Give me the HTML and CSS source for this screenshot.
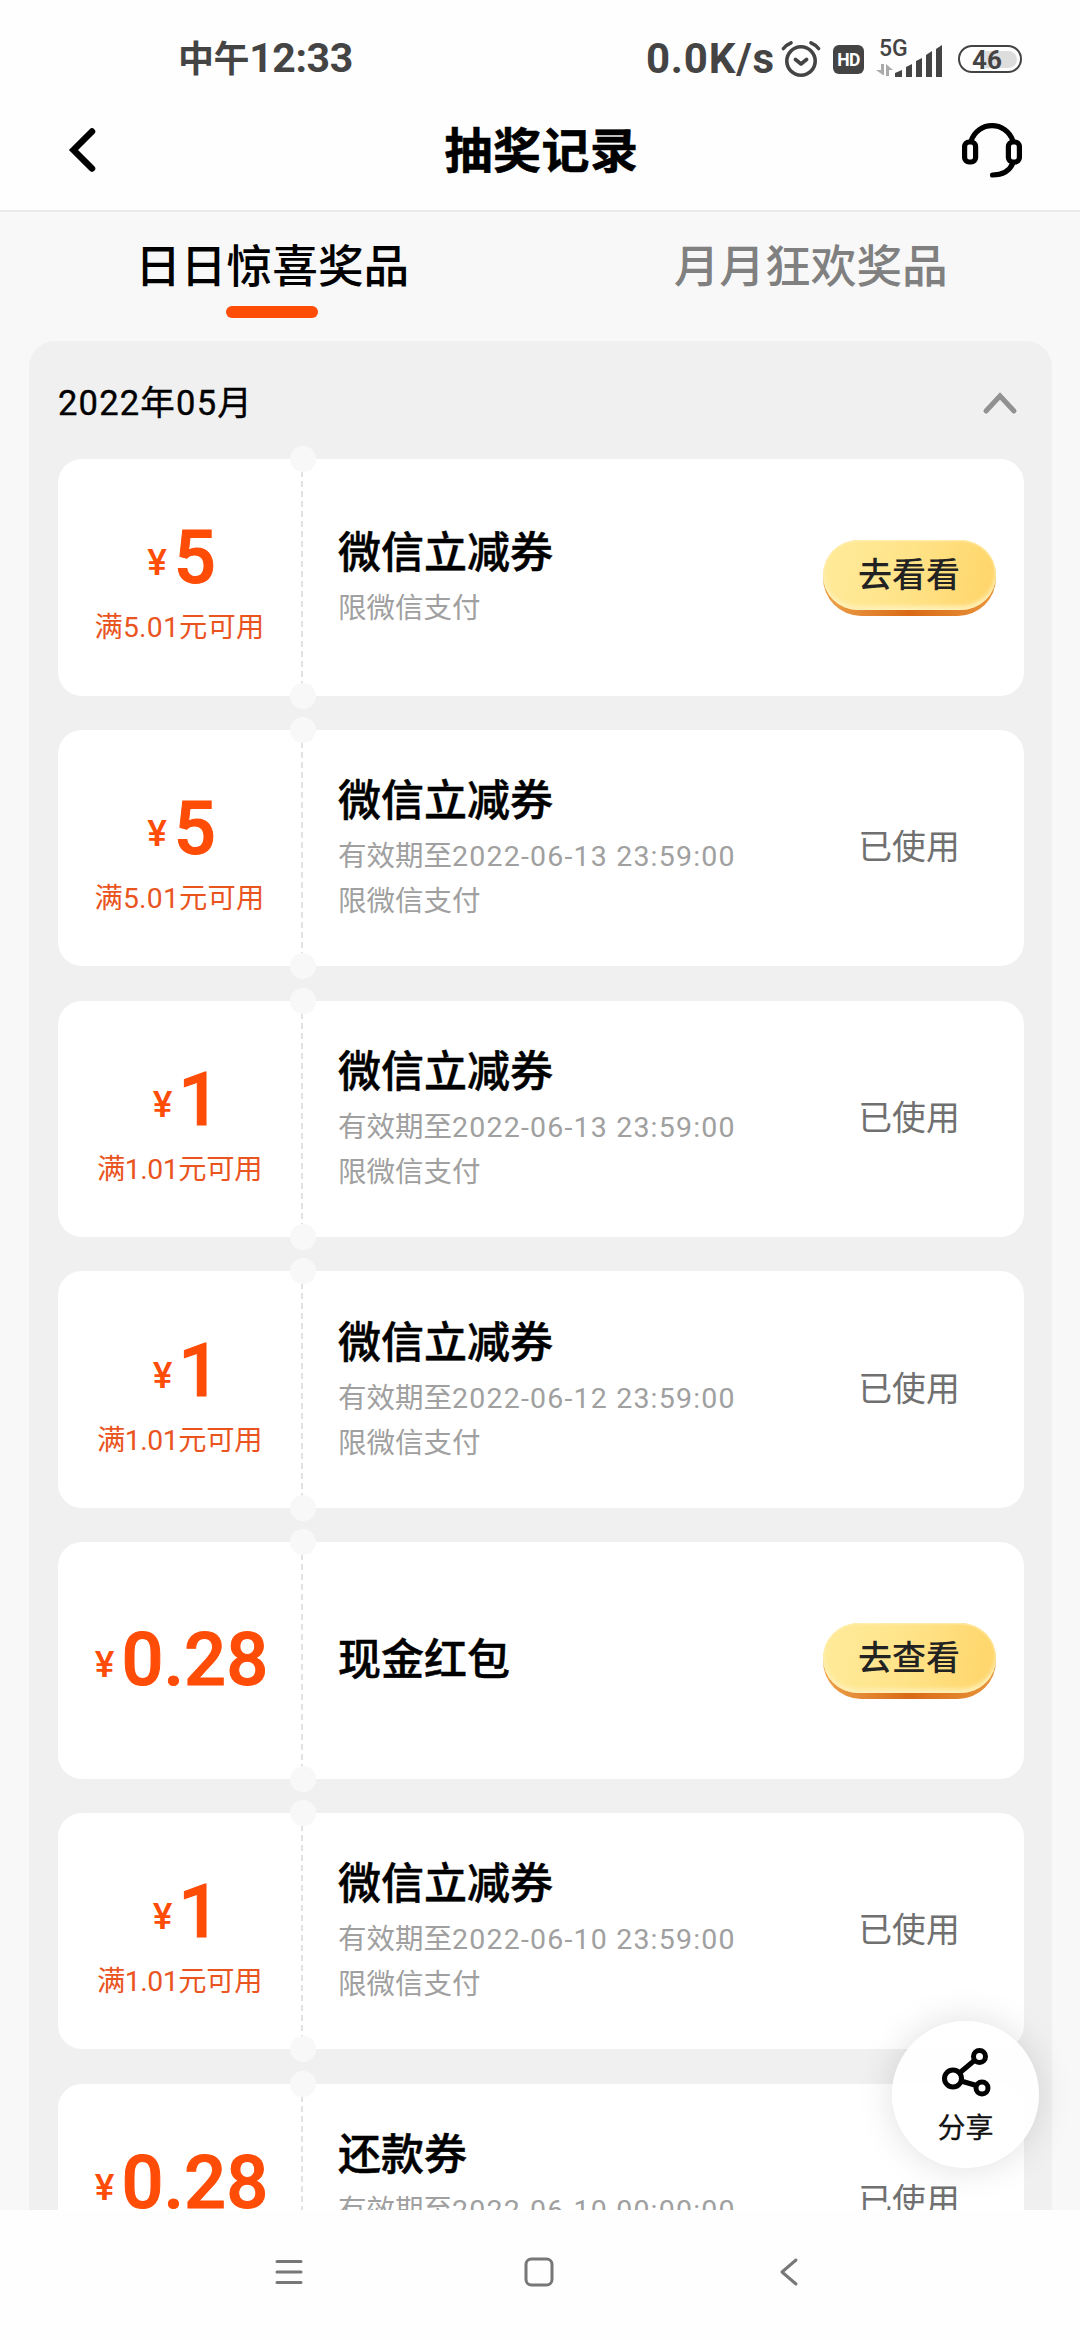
FILE: index.html
```
<!DOCTYPE html>
<html lang="zh-CN">
<head>
<meta charset="utf-8">
<title>抽奖记录</title>
<link rel="stylesheet" href="styles.css">
</head>
<body>
<div class="statusbar">
  <div class="clock"><span class="clock-cn">中午</span>12:33</div>
  <div class="indicators">
    <span class="speed">0.0K/s</span>
    <svg class="alarm" width="40" height="38" viewBox="0 0 40 38" fill="none" stroke="#444" stroke-width="3.6" stroke-linecap="round" stroke-linejoin="round"><circle cx="20" cy="21" r="14.2"/><path d="M14.5 19.5l5.5 4.5 5.500-4.500M2.500 8.500C4.500 6 7 4 10 2.800M37.500 8.500C35.500 6 33 4 30 2.800"/></svg>
    <span class="hd">HD</span>
    <div class="signal">
      <span class="net">5G</span>
      <svg width="67" height="32" viewBox="0 0 67 32" class="bars-svg"><path fill="#aaa" d="M5 19h3v11h-1L0 25h5zM10 19l7 6h-4v6h-3z"/><path fill="#444" d="M19 32v-4l7-3v7zM30 32V22l6-3v13zM40 32V16l6-3v19zM50 32V10l6-4v26zM60 32V4l6-4v32z"/></svg>
    </div>
    <span class="battery"><b>46</b></span>
  </div>
</div>
<header class="header">
  <svg class="back" width="32" height="48" viewBox="0 0 32 48" fill="none" stroke="#000" stroke-width="6.500" stroke-linecap="round"><path d="M26 5.500L7.500 24 26 42.500"/></svg>
  <h1>抽奖记录</h1>
  <svg class="service" width="62" height="58" viewBox="0 0 62 58" fill="none" stroke="#000" stroke-width="5.200" stroke-linecap="round"><rect x="3.600" y="20" width="11" height="20" rx="4.500"/><rect x="47.400" y="20" width="11" height="20" rx="4.500"/><path d="M10 19C13.500 9 22 3.600 31 3.600S48.500 9 52 19M52 41C48.500 49 42 53 31.500 53"/></svg>
</header>
<main class="content">
  <nav class="tabs">
    <div class="tab active">日日惊喜奖品</div>
    <div class="tab">月月狂欢奖品</div>
  </nav>
  <section class="panel">
    <div class="month"><span>2022年05月</span><svg width="36" height="24" viewBox="0 0 36 24" fill="none" stroke="#919191" stroke-width="5" stroke-linecap="round"><path d="M4 20L18 5l14 15"/></svg></div>
    <div class="list">
      <article class="card">
        <div class="value"><div class="price"><i>¥</i>5</div><div class="cond">满5.01元可用</div></div>
        <div class="info"><h2>微信立减券</h2><p>限微信支付</p></div>
        <div class="action"><a class="btn">去看看</a></div>
      </article>
      <article class="card">
        <div class="value"><div class="price"><i>¥</i>5</div><div class="cond">满5.01元可用</div></div>
        <div class="info"><h2>微信立减券</h2><p>有效期至<time>2022-06-13 23:59:00</time></p><p>限微信支付</p></div>
        <div class="action">已使用</div>
      </article>
      <article class="card">
        <div class="value"><div class="price"><i>¥</i><span class="one">1</span></div><div class="cond narrow">满1.01元可用</div></div>
        <div class="info"><h2>微信立减券</h2><p>有效期至<time>2022-06-13 23:59:00</time></p><p>限微信支付</p></div>
        <div class="action">已使用</div>
      </article>
      <article class="card">
        <div class="value"><div class="price"><i>¥</i><span class="one">1</span></div><div class="cond narrow">满1.01元可用</div></div>
        <div class="info"><h2>微信立减券</h2><p>有效期至<time>2022-06-12 23:59:00</time></p><p>限微信支付</p></div>
        <div class="action">已使用</div>
      </article>
      <article class="card">
        <div class="value"><div class="price"><i>¥</i>0.28</div></div>
        <div class="info single"><h2>现金红包</h2></div>
        <div class="action"><a class="btn">去查看</a></div>
      </article>
      <article class="card">
        <div class="value"><div class="price"><i>¥</i><span class="one">1</span></div><div class="cond narrow">满1.01元可用</div></div>
        <div class="info"><h2>微信立减券</h2><p>有效期至<time>2022-06-10 23:59:00</time></p><p>限微信支付</p></div>
        <div class="action">已使用</div>
      </article>
      <article class="card">
        <div class="value"><div class="price"><i>¥</i>0.28</div><div class="cond"></div></div>
        <div class="info"><h2>还款券</h2><p>有效期至<time>2022-06-10 00:00:00</time></p><p></p></div>
        <div class="action">已使用</div>
      </article>
    </div>
  </section>
  <div class="share">
    <svg width="50" height="50" viewBox="0 0 50 50" fill="none" stroke="#000" stroke-width="5"><circle cx="12" cy="31.500" r="8.500"/><circle cx="38.500" cy="9.500" r="6"/><circle cx="41" cy="41" r="6"/><path d="M18.500 26L34 13M20 34l15.500 4.500"/></svg>
    <span>分享</span>
  </div>
</main>
<footer class="navbar">
  <svg width="28" height="30" viewBox="0 0 28 30" stroke="#777" stroke-width="3" stroke-linecap="round"><path d="M2 4.500h24M2 15h24M2 25.500h24"/></svg>
  <svg class="home" width="30" height="30" viewBox="0 0 30 30" fill="none" stroke="#777" stroke-width="3"><rect x="2" y="2" width="26" height="26" rx="5.500"/></svg>
  <svg width="20" height="30" viewBox="0 0 20 30" fill="none" stroke="#777" stroke-width="3" stroke-linecap="round" stroke-linejoin="round"><path d="M17 3L3 15l14 12"/></svg>
</footer>
</body>
</html>
```
FILE: styles.css
```
* { box-sizing: border-box; margin: 0; padding: 0; }
body {
  width: 1080px; height: 2340px; overflow: hidden;
  display: flex; flex-direction: column;
  background: #fefefe; color: #000;
  font-family: Roboto, "Noto Sans CJK SC", sans-serif;
}
svg { display: block; flex: none; }

.statusbar {
  height: 118px; flex: none; padding: 0 58px 0 178px;
  display: flex; justify-content: space-between; align-items: center;
  color: #444; font-weight: 700;
}
.clock { font-size: 41px; line-height: 50px; letter-spacing: -.4px; }
.clock-cn { font-size: 36px; }
.indicators { display: flex; align-items: center; }
.speed { font-size: 42px; line-height: 50px; letter-spacing: .8px; }
.alarm { margin-left: 6px; }
.hd {
  margin-left: 12px; width: 31px; height: 29px; border-radius: 6px;
  background: #444; color: #fff; font-size: 17.500px; line-height: 30px; text-align: center;
  letter-spacing: -.5px;
}
.signal { margin-left: 12px; width: 67px; height: 36px; display: grid; }
.net, .bars-svg { grid-area: 1 / 1; }
.net { font-size: 23px; line-height: 16px; font-weight: 500; padding-left: 3px; }
.bars-svg { align-self: end; }
.battery {
  margin-left: 15px; width: 64px; height: 28px; border: 2.5px solid #444; border-radius: 14px;
  display: flex; align-items: center; padding: 0 3px;
}
.battery b {
  flex: 1; height: 17px; padding-left: 9px; border-radius: 0 9px 9px 0;
  background: linear-gradient(90deg, transparent 40%, #ddd 40%);
  font-size: 26px; line-height: 18px; font-weight: 700;
}

.header {
  height: 92px; flex: none; padding: 0 57px 0 66px;
  display: flex; justify-content: space-between; align-items: center;
}
.header svg { margin-bottom: 28px; }
.header .service { margin-bottom: 27px; }
.header h1 {
  font-size: 48px; line-height: 64px; font-weight: 700; margin-bottom: 25px;
  letter-spacing: .5px; padding-left: 24px; -webkit-text-stroke: .6px #000;
}

.content {
  height: 2000px; flex: none; position: relative; overflow: hidden;
  background: #f8f8f8; border-top: 2px solid #e9e9e9;
}
.tabs { display: flex; height: 129px; }
.tab {
  flex: 1; display: flex; flex-direction: column; align-items: center;
  padding-top: 24px; font-size: 45.700px; line-height: 64px; font-weight: 500; color: #808080;
}
.tab.active { color: #000; padding-left: 3px; }
.tab.active::after {
  content: ""; width: 92px; height: 12px; margin-top: 6px; border-radius: 6px; background: #ff4c06;
}

.panel { margin: 0 28px 0 29px; padding: 0 28.500px 0 29px; border-radius: 26px; background: #f0f0f0; }
.month {
  height: 118px; display: flex; align-items: center; justify-content: space-between;
  padding: 3px 6px 0 0; font-size: 34.500px; -webkit-text-stroke: .4px #000; letter-spacing: 1.2px;
}
.month span { margin-top: -3px; }
.month svg { margin-top: 2px; }
.list { display: flex; flex-direction: column; gap: 34.300px; }
.card {
  position: relative; height: 236.500px; flex: none; border-radius: 24px; background: #fff;
  display: grid; grid-template-columns: 245px 1fr 231px; align-items: center;
}
.card::before, .card::after {
  content: ""; position: absolute; left: 232px; width: 26px; height: 26px; border-radius: 50%; background: #f8f8f8;
}
.card::before { top: -13px; }
.card::after { bottom: -13px; }
.value {
  height: 100%; padding-top: 12px; display: flex; flex-direction: column; align-items: center; justify-content: center;
  background: repeating-linear-gradient(#e2e2e2 0 6px, transparent 6px 10px) right 2px / 2px 100% no-repeat;
  color: #ff4c06;
}
.price {
  font-size: 74px; line-height: 80px; font-weight: 500; white-space: nowrap; padding-left: 2px;
  -webkit-text-stroke: 1px #ff4c06;
}
.price i { font-style: normal; font-size: 37px; margin-right: 7px; position: relative; top: -8px; -webkit-text-stroke: 0; }
.one { margin: 0 -10px 0 -1px; }
.cond { height: 37px; font-size: 28.300px; line-height: 34px; color: #e9541f; letter-spacing: .2px; margin-left: -2px; }
.cond.narrow { letter-spacing: -.4px; }
.info { padding: 0 0 3px 35px; white-space: nowrap; }
.info.single { padding-bottom: 0; }
.info h2 { font-size: 43px; line-height: 67px; font-weight: 500; -webkit-text-stroke: .5px #000; }
.info p { height: 45px; font-size: 28.500px; line-height: 43px; color: #a0a0a0; }
.info time { letter-spacing: 1.200px; }
.action { text-align: center; font-size: 33.800px; line-height: 48px; color: #707070; padding-left: 2px; }
.btn {
  display: block; width: 173px; height: 76px; margin: 1px auto 0; border-radius: 38px;
  background: linear-gradient(90deg, #eda24c, #d96a16 50%, #e9953d);
  color: #222; font-weight: 500; font-size: 34px; line-height: 71px; position: relative; z-index: 0;
}
.btn::before {
  content: ""; position: absolute; z-index: -1; inset: 0 0 6px; border-radius: 36px;
  background: linear-gradient(100deg, #ffeb9b, #ffe388 50%, #ffd468);
  box-shadow: inset 0 -4px 4px #fff0b8, inset 0 1px 2px #fff0b8;
}

.share {
  position: absolute; left: 892px; top: 1809px; width: 147px; height: 147px; border-radius: 50%;
  background: rgba(255, 255, 255, .9); box-shadow: 0 0 36px rgba(0, 0, 0, .13);
  display: flex; flex-direction: column; align-items: center; padding-top: 26px;
}
.share span { font-size: 28px; line-height: 40px; margin-top: 12px; color: #111; -webkit-text-stroke: .3px #111; }

.navbar {
  height: 130px; flex: none; padding: 47px 281px 0 275px;
  display: flex; justify-content: space-between; align-items: flex-start;
}
.navbar .home { margin-right: 5px; }
```
